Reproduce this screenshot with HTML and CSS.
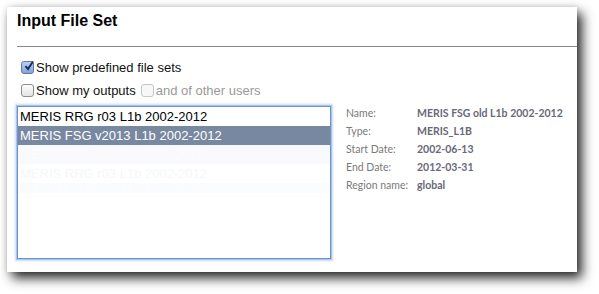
FILE: index.html
```html
<!DOCTYPE html>
<html lang="en">
<head>
    <meta charset="UTF-8">
    <title>Input File Set</title>
    <link rel="stylesheet" href="styles.css">
</head>
<body>
    <div class="panel">
        <h2 class="panel-title">Input File Set</h2>
        <div class="options">
            <label class="opt">
                <span class="box checked">
                    <svg viewBox="0 0 12 12" width="12" height="12"><path d="M2.5 6.2 L5 9 L10 1.5" fill="none" stroke="#1d2f5c" stroke-width="2"/></svg>
                </span>Show predefined file sets
            </label>
            <label class="opt">
                <span class="box"></span>Show my outputs
                <span class="box disabled"></span><span class="muted">and of other users</span>
            </label>
        </div>
        <div class="content">
            <div class="file-list">
                <div class="item">MERIS RRG r03 L1b 2002-2012</div>
                <div class="item selected">MERIS FSG v2013 L1b 2002-2012</div>
                <div class="item ghost ghost-1">MERIS FSG old L1b 2002-2012</div>
                <div class="item ghost ghost-2">MERIS RRG r03 L1b 2002-2012</div>
                <div class="item ghost ghost-3">MERIS FSG v2013 L1b 2002-2012</div>
            </div>
            <table class="details">
                <tr><td class="key">Name:</td><td class="val">MERIS FSG old L1b 2002-2012</td></tr>
                <tr><td class="key">Type:</td><td class="val">MERIS_L1B</td></tr>
                <tr><td class="key">Start Date:</td><td class="val">2002-06-13</td></tr>
                <tr><td class="key">End Date:</td><td class="val">2012-03-31</td></tr>
                <tr><td class="key">Region name:</td><td class="val">global</td></tr>
            </table>
        </div>
    </div>
</body>
</html>
```

FILE: styles.css
```css
html, body {
    height: 100%;
}
body {
    margin: 0;
    padding: 7px 0 0 7px;
    box-sizing: border-box;
    background: #fff;
    font-family: 'Liberation Sans', Arial, sans-serif;
    color: #000;
}
.panel {
    width: 570px;
    height: 265px;
    background: #fff;
    box-shadow: 5px 6px 11px rgba(0, 0, 0, 0.85), 0 0 5px rgba(0, 0, 0, 0.12);
    box-sizing: border-box;
    padding: 0 0 0 10px;
}
.panel-title {
    margin: 0;
    padding-top: 5px;
    height: 34px;
    line-height: 18px;
    font-size: 16px;
    font-weight: bold;
    border-bottom: 1px solid #8a8a8a;
}
.options {
    padding: 9px 0 0 4px;
}
.opt {
    display: flex;
    align-items: center;
    height: 23px;
    font-size: 13px;
    color: #111;
}
.box {
    display: inline-block;
    width: 11px;
    height: 11px;
    border: 1px solid #8d8d8d;
    border-radius: 3px;
    background: linear-gradient(#fdfdfd, #e4e4e4);
    margin-right: 2px;
    position: relative;
}
.box.checked {
    background: linear-gradient(#b9d0ef, #7fa6dc);
    border-color: #5d7aa6;
}
.box.checked svg {
    position: absolute;
    left: 1px;
    top: -2px;
}
.box.disabled {
    margin-left: 5px;
    border-color: #c6c6c6;
    background: #f7f7f7;
}
.muted {
    color: #9a9a9a;
}
.content {
    display: flex;
    margin-top: 4px;
}
.file-list {
    width: 312px;
    height: 151px;
    border: 1px solid #6d93c9;
    box-shadow: 0 0 0 1px #a9c4ea, 0 0 2px 2px #c8daf2;
    font-size: 13px;
    overflow: hidden;
}
.item {
    height: 19px;
    line-height: 19px;
    padding-left: 2px;
    white-space: nowrap;
}
.item.selected {
    background: #7888a0;
    color: #fff;
}
.ghost {
    color: #fff;
}
.ghost-1 {
    background: #f8fafd;
    color: #fbfcfe;
}
.ghost-2 {
    color: #f6f7f8;
}
.ghost-3 {
    height: 10px;
    line-height: 10px;
    font-size: 12px;
    color: #fafbfc;
    background: #fbfcfe;
}
.details {
    margin-left: 15px;
    margin-top: -2px;
    border-collapse: collapse;
    font-family: Lato, 'Open Sans', sans-serif;
    font-size: 10.5px;
    align-self: flex-start;
}
.details td {
    padding: 0;
    height: 18px;
    vertical-align: middle;
}
.key {
    color: #7a7a7a;
    width: 71px;
}
.val {
    color: #69677a;
    font-weight: bold;
}
```
